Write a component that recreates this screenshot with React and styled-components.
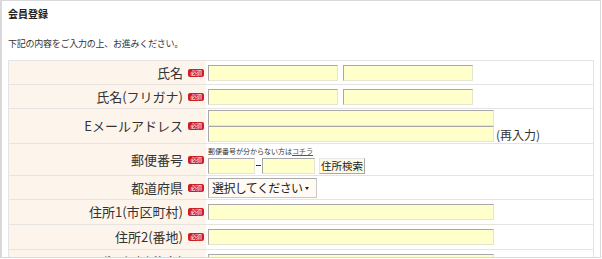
import React from "react";
import styled, { createGlobalStyle } from "styled-components";

const GlobalStyle = createGlobalStyle`
  html, body { margin: 0; padding: 0; background: #fff; }
  body { font-family: "Noto Sans CJK JP", "Noto Sans", sans-serif; color: #333; }
`;

const Frame = styled.div`
  width: 601px;
  height: 258px;
  box-sizing: border-box;
  border: 1px solid #d9d9d9;
  border-left-width: 2px;
  padding: 0 6px 0 6px;
  overflow: hidden;
`;

const Title = styled.h1`
  margin: 6px 0 0;
  font-size: 10px;
  line-height: 14px;
  font-weight: bold;
  color: #222;
`;

const Lead = styled.p`
  margin: 17px 0 0;
  font-size: 9px;
  letter-spacing: -0.25px;
  line-height: 12px;
  color: #333;
`;

const FormTable = styled.div`
  margin-top: 10px;
  border: 1px solid #e4e4e4;
  border-bottom: none;
`;

const Row = styled.div`
  display: grid;
  grid-template-columns: 197px 1fr;
  height: ${(p) => p.$h}px;
  box-sizing: border-box;
  border-top: ${(p) => (p.$first ? "none" : "1px solid #e6e3e0")};
`;

const LabelCell = styled.div`
  background: #fdf5eb;
  display: flex;
  align-items: center;
  justify-content: flex-end;
  gap: 4px;
  padding-right: 2px;
  font-size: 13px;
  line-height: 16px;
  color: #333;
  white-space: nowrap;
`;

const LabelText = styled.span`
  margin-right: 1px;
`;

const Badge = styled.span`
  display: inline-flex;
  align-items: center;
  justify-content: center;
  width: 16px;
  height: 8px;
  border-radius: 2px;
  background: #cf1d1d;
  color: #fff;
  font-size: 6px;
  line-height: 8px;
  letter-spacing: -0.5px;
`;

const FieldCell = styled.div`
  display: flex;
  align-items: center;
  gap: 5px;
  padding-left: 2px;
  background: #fff;
`;

const TextInput = styled.input`
  box-sizing: border-box;
  width: ${(p) => p.$w}px;
  height: 16px;
  margin: 0;
  padding: 0 2px;
  background: #ffffcc;
  border: 1px solid;
  border-color: #a8a8a8 #e6e6d0 #e6e6d0 #a8a8a8;
  font-size: 11px;
  outline: none;
`;

const Stack = styled.div`
  display: flex;
  flex-direction: column;
`;

const Note = styled.span`
  font-size: 12px;
  line-height: 14px;
  align-self: flex-end;
  margin-left: -3px;
  margin-bottom: 1px;
  white-space: nowrap;
`;

const PostalBox = styled.div`
  display: flex;
  flex-direction: column;
  gap: 2px;
  margin-top: 1px;
`;

const Small = styled.div`
  font-size: 7px;
  line-height: 9px;
  color: #333;
  white-space: nowrap;
`;

const Link = styled.a`
  color: #555;
  text-decoration: underline;
`;

const PostalLine = styled.div`
  display: flex;
  align-items: center;
`;

const Dash = styled.span`
  display: inline-block;
  width: 5px;
  height: 1px;
  margin: 0 1px;
  background: #333;
`;

const Button = styled.button`
  box-sizing: border-box;
  height: 16px;
  width: 46px;
  margin-left: 4px;
  padding: 0;
  border: 1px solid;
  border-color: #e8e8e8 #a8a8a8 #a8a8a8 #e8e8e8;
  background: #fff9e4;
  font-family: inherit;
  font-size: 10.5px;
  line-height: 14px;
  color: #222;
  white-space: nowrap;
`;

const SelectBox = styled.div`
  box-sizing: border-box;
  width: 109px;
  height: 20px;
  display: flex;
  align-items: center;
  justify-content: space-between;
  padding: 0 7px 0 3px;
  border: 1px solid;
  border-color: #a8a8a8 #c8c8c8 #c8c8c8 #a8a8a8;
  background: #fffaf4;
  font-size: 12px;
  letter-spacing: -0.6px;
  line-height: 18px;
  color: #222;
  white-space: nowrap;
`;

const Arrow = styled.span`
  flex: none;
  width: 0;
  height: 0;
  border-left: 2px solid transparent;
  border-right: 2px solid transparent;
  border-top: 3px solid #222;
  margin-top: 2px;
`;

const Label = ({ children }) => (
  <LabelCell>
    <LabelText>{children}</LabelText>
    <Badge>必須</Badge>
  </LabelCell>
);

export default function App() {
  return (
    <>
      <GlobalStyle />
      <Frame>
        <Title>会員登録</Title>
        <Lead>下記の内容をご入力の上、お進みください。</Lead>
        <FormTable>
          <Row $h={23} $first>
            <Label>氏名</Label>
            <FieldCell>
              <TextInput $w={130} />
              <TextInput $w={130} />
            </FieldCell>
          </Row>
          <Row $h={24}>
            <Label>氏名(フリガナ)</Label>
            <FieldCell>
              <TextInput $w={130} />
              <TextInput $w={130} />
            </FieldCell>
          </Row>
          <Row $h={35}>
            <Label>Eメールアドレス</Label>
            <FieldCell>
              <Stack>
                <TextInput $w={286} />
                <TextInput $w={286} />
              </Stack>
              <Note>(再入力)</Note>
            </FieldCell>
          </Row>
          <Row $h={32}>
            <Label>郵便番号</Label>
            <FieldCell>
              <PostalBox>
                <Small>
                  郵便番号が分からない方は<Link>コチラ</Link>
                </Small>
                <PostalLine>
                  <TextInput $w={47} />
                  <Dash />
                  <TextInput $w={53} />
                  <Button>住所検索</Button>
                </PostalLine>
              </PostalBox>
            </FieldCell>
          </Row>
          <Row $h={24}>
            <Label>都道府県</Label>
            <FieldCell>
              <SelectBox>
                <span>選択してください</span>
                <Arrow />
              </SelectBox>
            </FieldCell>
          </Row>
          <Row $h={25}>
            <Label>住所1(市区町村)</Label>
            <FieldCell>
              <TextInput $w={286} />
            </FieldCell>
          </Row>
          <Row $h={25}>
            <Label>住所2(番地)</Label>
            <FieldCell>
              <TextInput $w={286} />
            </FieldCell>
          </Row>
          <Row $h={25}>
            <Label>住所3(建物名)</Label>
            <FieldCell>
              <TextInput $w={286} />
            </FieldCell>
          </Row>
        </FormTable>
      </Frame>
    </>
  );
}
